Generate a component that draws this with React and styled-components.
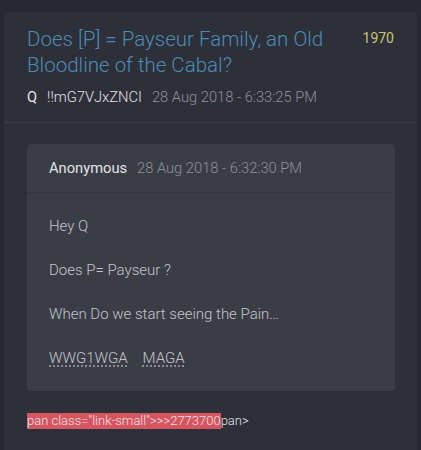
import React from 'react';
import styled, { createGlobalStyle } from 'styled-components';

const GlobalStyle = createGlobalStyle`
  body {
    margin: 0;
    background: #262931;
    font-family: Roboto, "Noto Sans", sans-serif;
  }
`;

const Page = styled.div`
  padding: 12px 4px 0;
  height: 438px;
  overflow: hidden;
`;

const Card = styled.div`
  background: #2d3039;
  border-radius: 3px 3px 0 0;
  min-height: 460px;
`;

const Header = styled.div`
  padding: 14px 23px 15px;
  border-bottom: 1px solid #3a3e47;
`;

const TitleRow = styled.div`
  display: flex;
  justify-content: space-between;
  align-items: flex-start;
`;

const Title = styled.h1`
  margin: 0;
  font-size: 20.5px;
  font-weight: 300;
  line-height: 26px;
  color: #4c8cb4;
  max-width: 320px;
`;

const Number = styled.span`
  font-size: 14px;
  line-height: 24px;
  color: #c9c474;
`;

const Meta = styled.div`
  margin-top: 9px;
  display: flex;
  gap: 10px;
  font-size: 14.7px;
  line-height: 20px;
`;

const Name = styled.span`
  color: ${p => p.dim ? '#8e9199' : '#e2e3e6'};
  font-weight: ${p => p.strong ? 400 : 300};
`;

const Body = styled.div`
  padding: 21px 22px 0 23px;
`;

const Quote = styled.div`
  background: #3a3d46;
  border-radius: 4px;
`;

const QuoteHeader = styled.div`
  height: 48px;
  padding: 0 22px;
  display: flex;
  align-items: center;
  gap: 10px;
  font-size: 14.7px;
  border-bottom: 1px solid #33363e;
`;

const QuoteBody = styled.div`
  padding: 23px 22px;
  display: flex;
  flex-direction: column;
  gap: 24px;
`;

const Line = styled.p`
  margin: 0;
  font-size: 15px;
  font-weight: 300;
  line-height: 20px;
  color: #c4c6cb;
  display: flex;
  gap: 15px;
`;

const Tag = styled.span`
  text-decoration: underline dotted;
  text-underline-offset: 3px;
  text-decoration-color: #a4a6ad;
`;

const Footer = styled.div`
  margin-top: 21px;
  font-size: 13px;
  font-weight: 300;
  line-height: 18px;
  color: #e6e6e8;
`;

const Mark = styled.span`
  background: #d75560;
  padding-bottom: 1px;
`;

export default function App() {
  return (
    <>
      <GlobalStyle />
      <Page>
        <Card>
          <Header>
            <TitleRow>
              <Title>Does [P] = Payseur Family, an Old Bloodline of the Cabal?</Title>
              <Number>1970</Number>
            </TitleRow>
            <Meta>
              <Name strong>Q</Name>
              <Name>!!mG7VJxZNCI</Name>
              <Name dim>28 Aug 2018 - 6:33:25 PM</Name>
            </Meta>
          </Header>
          <Body>
            <Quote>
              <QuoteHeader>
                <Name strong>Anonymous</Name>
                <Name dim>28 Aug 2018 - 6:32:30 PM</Name>
              </QuoteHeader>
              <QuoteBody>
                <Line>Hey Q</Line>
                <Line>Does P= Payseur ?</Line>
                <Line>When Do we start seeing the Pain…</Line>
                <Line>
                  <Tag>WWG1WGA</Tag>
                  <Tag>MAGA</Tag>
                </Line>
              </QuoteBody>
            </Quote>
            <Footer>
              <Mark>pan class="link-small"&gt;&gt;&gt;2773700</Mark>pan&gt;
            </Footer>
          </Body>
        </Card>
      </Page>
    </>
  );
}
